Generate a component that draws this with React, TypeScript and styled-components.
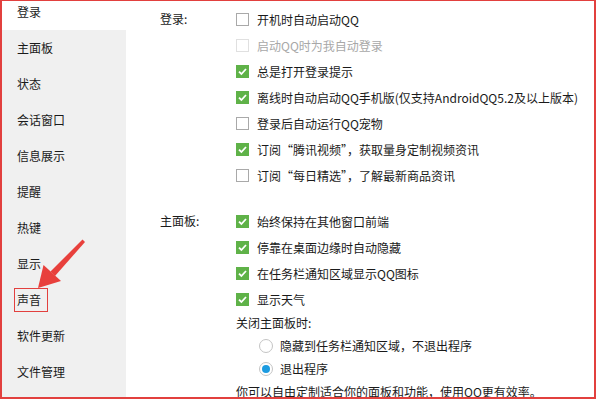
import React from "react";
import styled, { createGlobalStyle } from "styled-components";

const Global = createGlobalStyle`
  html, body { margin: 0; padding: 0; background: #fff; }
  body { font-family: "Noto Sans CJK SC", "Noto Sans", sans-serif; font-size: 12px; color: #1a1a1a; overflow: hidden; }
`;

const Frame = styled.div`
  position: relative;
  width: 592px;
  height: 396px;
  border-top: 1px solid #e2403e;
  border-left: 2px solid #e2403e;
  border-right: 2px solid #e2403e;
  border-bottom: 2px solid #e2403e;
  display: flex;
  overflow: hidden;
  background: #fff;
`;

const Sidebar = styled.nav`
  width: 124px;
  flex: none;
  background: #f0f0f0;
  display: flex;
  flex-direction: column;
  margin-top: -7px;
`;

const NavItem = styled.div<{ $active?: boolean }>`
  height: 36px;
  display: flex;
  align-items: center;
  padding-left: 15px;
  background: ${(p) => (p.$active ? "#fff" : "transparent")};
  line-height: 1;
`;

const NavLabel = styled.span<{ $marked?: boolean }>`
  display: inline-block;
  padding: ${(p) => (p.$marked ? "5px 6px 5px 2px" : "0")};
  margin-left: ${(p) => (p.$marked ? "-3px" : "0")};
  border: ${(p) => (p.$marked ? "1px solid #e2403e" : "none")};
`;

const Content = styled.div`
  flex: 1;
  padding: 5px 0 0 34px;
  display: flex;
  flex-direction: column;
  gap: 20px;
`;

const Section = styled.section`
  display: grid;
  grid-template-columns: 76px 1fr;
`;

const SectionLabel = styled.div`
  height: 26px;
  display: flex;
  align-items: center;
  padding-bottom: 2px;
  box-sizing: border-box;
`;

const Options = styled.div`
  display: flex;
  flex-direction: column;
`;

const Row = styled.div<{ $disabled?: boolean }>`
  height: 26px;
  display: flex;
  align-items: center;
  gap: 8px;
  color: ${(p) => (p.$disabled ? "#a8a8a8" : "#1a1a1a")};
  white-space: nowrap;
`;

const SubLabel = styled.div`
  height: 20px;
  display: flex;
  align-items: center;
  white-space: nowrap;
`;

const RadioRow = styled.div<{ $first?: boolean }>`
  height: 23px;
  margin-top: ${(p) => (p.$first ? "2px" : "0")};
  display: flex;
  align-items: center;
  gap: 7px;
  padding-left: 23px;
  white-space: nowrap;
`;

const Note = styled.div`
  height: 23px;
  display: flex;
  align-items: center;
  white-space: nowrap;
`;

const Box = styled.span<{ $checked?: boolean; $disabled?: boolean }>`
  width: 13px;
  height: 13px;
  box-sizing: border-box;
  flex: none;
  display: inline-flex;
  align-items: center;
  justify-content: center;
  background: ${(p) => (p.$checked ? "#5fb248" : "#fff")};
  border: 1px solid
    ${(p) => (p.$checked ? "#5fb248" : p.$disabled ? "#e0e0e0" : "#a9a9a9")};
`;

const Radio = styled.span<{ $checked?: boolean }>`
  width: 14px;
  height: 14px;
  box-sizing: border-box;
  border-radius: 50%;
  flex: none;
  border: 1px solid #c4c4c4;
  background: #fff;
  display: inline-flex;
  align-items: center;
  justify-content: center;
  &::after {
    content: "";
    width: 8px;
    height: 8px;
    border-radius: 50%;
    background: ${(p) => (p.$checked ? "#1c9be0" : "transparent")};
  }
`;

const Arrow = styled.svg`
  position: absolute;
  left: 0;
  top: 0;
  pointer-events: none;
`;

const Check = ({ checked, disabled }: { checked?: boolean; disabled?: boolean }) => (
  <Box $checked={checked} $disabled={disabled}>
    {checked && (
      <svg width="11" height="11" viewBox="0 0 11 11">
        <path d="M2 5.6 L4.4 8 L9 3" fill="none" stroke="#fff" strokeWidth="1.8" />
      </svg>
    )}
  </Box>
);

const nav = ["登录", "主面板", "状态", "会话窗口", "信息展示", "提醒", "热键", "显示", "声音", "软件更新", "文件管理"];

const loginOpts: [string, boolean, boolean?][] = [
  ["开机时自动启动QQ", false],
  ["启动QQ时为我自动登录", false, true],
  ["总是打开登录提示", true],
  ["离线时自动启动QQ手机版(仅支持AndroidQQ5.2及以上版本)", true],
  ["登录后自动运行QQ宠物", false],
  ["订阅“腾讯视频”，获取量身定制视频资讯", true],
  ["订阅“每日精选”，了解最新商品资讯", false],
];

const panelOpts: [string, boolean][] = [
  ["始终保持在其他窗口前端", true],
  ["停靠在桌面边缘时自动隐藏", true],
  ["在任务栏通知区域显示QQ图标", true],
  ["显示天气", true],
];

export default function App() {
  return (
    <>
      <Global />
      <Frame lang="zh-CN">
        <Sidebar>
          {nav.map((n, i) => (
            <NavItem key={n} $active={i === 0}>
              <NavLabel $marked={n === "声音"}>{n}</NavLabel>
            </NavItem>
          ))}
        </Sidebar>
        <Content>
          <Section>
            <SectionLabel>登录:</SectionLabel>
            <Options>
              {loginOpts.map(([t, c, d]) => (
                <Row key={t} $disabled={d}>
                  <Check checked={c} disabled={d} />
                  <span>{t}</span>
                </Row>
              ))}
            </Options>
          </Section>
          <Section>
            <SectionLabel>主面板:</SectionLabel>
            <Options>
              {panelOpts.map(([t, c]) => (
                <Row key={t}>
                  <Check checked={c} />
                  <span>{t}</span>
                </Row>
              ))}
              <SubLabel>关闭主面板时:</SubLabel>
              <RadioRow $first>
                <Radio />
                <span>隐藏到任务栏通知区域，不退出程序</span>
              </RadioRow>
              <RadioRow>
                <Radio $checked />
                <span>退出程序</span>
              </RadioRow>
              <Note>你可以自由定制适合你的面板和功能，使用QQ更有效率。</Note>
            </Options>
          </Section>
        </Content>
        <Arrow width="120" height="320" viewBox="0 0 120 320">
          <polygon points="80.5,238.5 83,241 53,275 48.5,270.5" fill="#e8403c" />
          <polygon points="36,287 41.5,264 59,280" fill="#e8403c" />
        </Arrow>
      </Frame>
    </>
  );
}
